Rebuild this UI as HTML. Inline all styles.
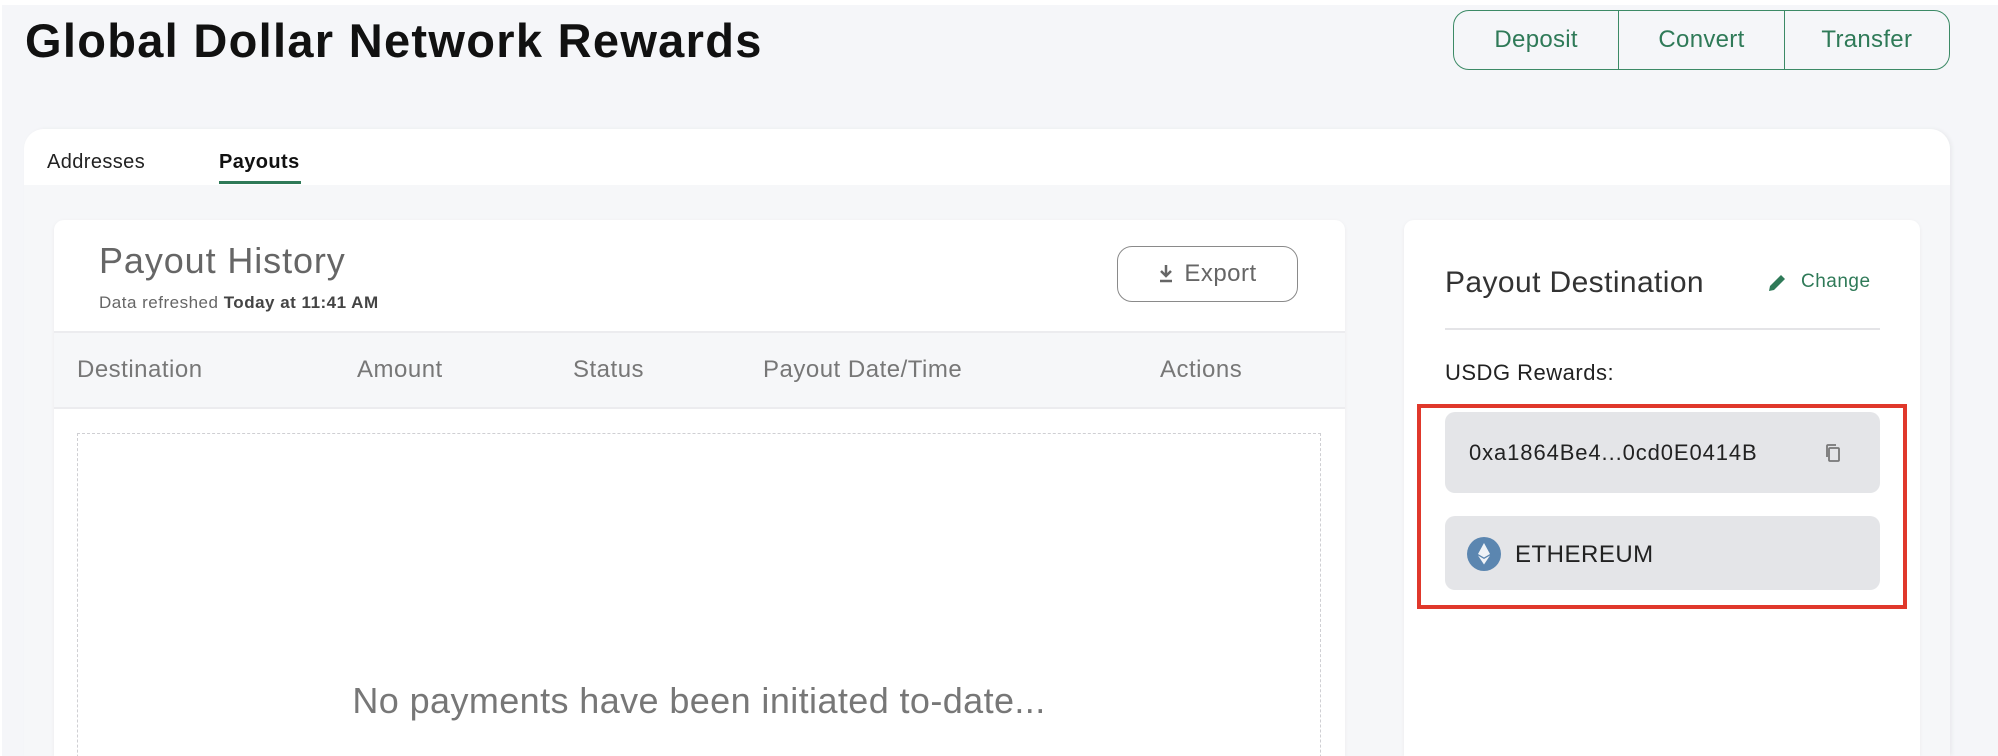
<!DOCTYPE html>
<html><head><meta charset="utf-8"><style>
*{margin:0;padding:0;box-sizing:border-box}
html,body{width:1998px;height:756px;overflow:hidden}
body{background:#f5f6f9;font-family:"Liberation Sans",sans-serif;position:relative}
.a{position:absolute}
h1{position:absolute;left:25px;top:13px;font-size:47px;font-weight:bold;color:#111;letter-spacing:1.3px}
.btns{left:1453px;top:10px;width:497px;height:60px;border:1.5px solid #3c8a66;border-radius:16px;display:flex;overflow:hidden}
.btns div{flex:1;display:flex;align-items:center;justify-content:center;color:#2f7a58;font-size:24px;letter-spacing:.3px;border-right:1.5px solid #3c8a66}
.btns div:last-child{border-right:none}
.panel{left:24px;top:129px;width:1926px;height:627px;background:#f6f7f9;border-radius:20px 20px 0 0;box-shadow:2px 0 4px rgba(0,0,0,.05);overflow:hidden}
.tabbar{left:0;top:0;width:100%;height:56px;background:#fff}
.card{background:#fff;border-radius:10px;box-shadow:0 1px 4px rgba(0,0,0,.05)}
.th{font-size:24px;letter-spacing:.5px;color:#777;top:356px}
</style></head><body>
<div class="a" style="left:0;top:0;width:1998px;height:5px;background:#fff"></div>
<div class="a" style="left:0;top:0;width:2px;height:756px;background:#fff"></div>
<h1>Global Dollar Network Rewards</h1>
<div class="a btns"><div>Deposit</div><div>Convert</div><div>Transfer</div></div>
<div class="a panel">
 <div class="a tabbar"></div>
 <div class="a" style="left:23px;top:22px;font-size:20px;letter-spacing:.4px;color:#222">Addresses</div>
 <div class="a" style="left:195px;top:22px;font-size:20px;letter-spacing:.4px;color:#111;font-weight:bold">Payouts</div>
 <div class="a" style="left:195px;top:52px;width:82px;height:3px;background:#2f7a58"></div>
</div>
<div class="a card" style="left:54px;top:220px;width:1291px;height:536px;overflow:hidden;border-radius:10px 10px 0 0">
 <div class="a" style="left:0;top:111px;width:100%;height:78px;background:#f6f7f9;border-top:2px solid #ececef;border-bottom:2px solid #ececef"></div>
 <div class="a" style="left:23px;top:213px;width:1244px;height:400px;border:1.5px dashed #cfcfd3"></div>
</div>
<div class="a" style="left:99px;top:240px;font-size:36px;letter-spacing:.9px;color:#666">Payout History</div>
<div class="a" style="left:99px;top:293px;font-size:17px;letter-spacing:.5px;color:#666">Data refreshed <b style="color:#444">Today at 11:41 AM</b></div>
<div class="a" style="left:1117px;top:246px;width:181px;height:56px;border:1.5px solid #8a8a8a;border-radius:15px;display:flex;align-items:center;justify-content:center;color:#666;font-size:24px;letter-spacing:.5px;gap:10px">
 <svg width="16" height="20" viewBox="0 0 16 20"><path d="M8 1v11M3 7l5 5 5-5" stroke="#666" stroke-width="2.5" fill="none"/><path d="M2 17h12" stroke="#666" stroke-width="2.5"/></svg>Export</div>
<div class="a th" style="left:77px">Destination</div>
<div class="a th" style="left:357px">Amount</div>
<div class="a th" style="left:573px">Status</div>
<div class="a th" style="left:763px">Payout Date/Time</div>
<div class="a th" style="left:1160px">Actions</div>
<div class="a" style="left:77px;top:680px;width:1244px;text-align:center;font-size:36px;letter-spacing:.4px;color:#777">No payments have been initiated to-date...</div>

<div class="a card" style="left:1404px;top:220px;width:516px;height:536px;border-radius:10px 10px 0 0"></div>
<div class="a" style="left:1445px;top:266px;font-size:30px;letter-spacing:.4px;color:#333">Payout Destination</div>
<svg class="a" style="left:1766px;top:272px" width="22" height="22" viewBox="0 0 22 22"><path d="M3 19l1-5L15 3l4 4L8 18z" fill="#2f7a58"/></svg>
<div class="a" style="left:1801px;top:271px;font-size:19px;letter-spacing:.5px;color:#2f7a58">Change</div>
<div class="a" style="left:1445px;top:328px;width:435px;height:2px;background:#e4e4e7"></div>
<div class="a" style="left:1445px;top:360px;font-size:22px;letter-spacing:.5px;color:#222">USDG Rewards:</div>
<div class="a" style="left:1417px;top:404px;width:490px;height:205px;border:4px solid #e0382b"></div>
<div class="a" style="left:1445px;top:412px;width:435px;height:81px;background:#e4e5e8;border-radius:10px"></div>
<div class="a" style="left:1469px;top:440px;font-size:22px;letter-spacing:.9px;color:#222">0xa1864Be4...0cd0E0414B</div>
<svg class="a" style="left:1824px;top:443px" width="18" height="20" viewBox="0 0 18 20"><rect x="5" y="5" width="10" height="13" rx="1" fill="none" stroke="#777" stroke-width="1.8"/><path d="M3 14V3a1 1 0 0 1 1-1h8" fill="none" stroke="#777" stroke-width="1.8"/></svg>
<div class="a" style="left:1445px;top:516px;width:435px;height:74px;background:#e4e5e8;border-radius:10px"></div>
<svg class="a" style="left:1467px;top:537px" width="34" height="34" viewBox="0 0 34 34"><circle cx="17" cy="17" r="17" fill="#5b86b0"/><path d="M17 6l-6 11 6 3.5 6-3.5z M17 22l-6-3.5 6 9 6-9z" fill="#fff" opacity=".9"/></svg>
<div class="a" style="left:1515px;top:541px;font-size:24px;letter-spacing:.5px;color:#222">ETHEREUM</div>
</body></html>
